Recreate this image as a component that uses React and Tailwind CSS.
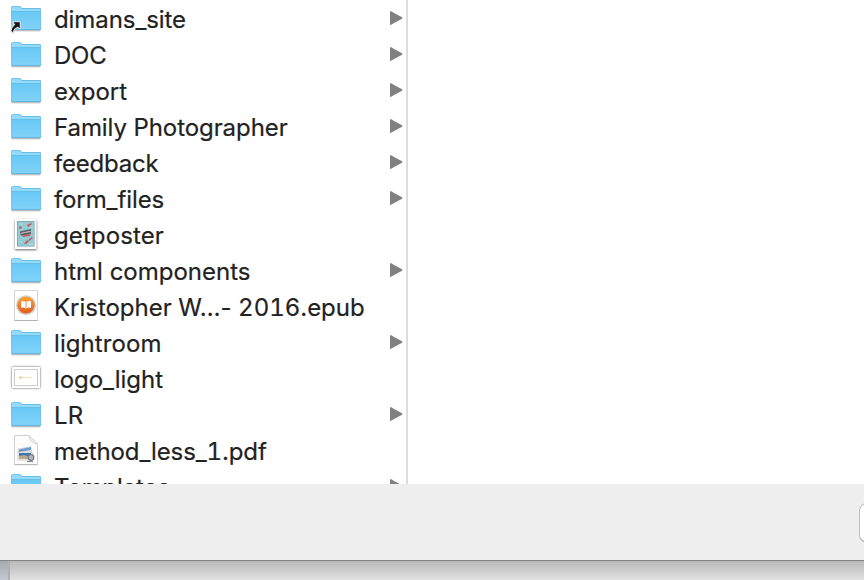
const Folder = ({ alias }) => (
  <svg className="block" width="44" height="36" viewBox="0 0 44 36">
    <defs>
      <linearGradient id="face" x1="0" y1="0" x2="0" y2="1">
        <stop offset="0" stopColor="#69c8f5" />
        <stop offset="1" stopColor="#80d2f8" />
      </linearGradient>
    </defs>
    <path d="M11.5 30.5H40.5" stroke="#b9bec2" strokeWidth="1" />
    <path d="M12 31.5H40" stroke="#e9e9e9" strokeWidth="1" />
    <path d="M11 7.5Q11 6 12.5 6H19.3Q20.2 6 20.9 6.8L21.5 7.4Q22 8 23 8H40Q41 8 41 9V29Q41 30 40 30H12Q11 30 11 29Z" fill="#6bbfe6" />
    <path d="M11.6 7.6Q12 6.800 12.8 6.800H19.200Q19.800 6.800 20.3 7.400L21.300 8.400Q22 9 23 9H40.400V11H11.600Z" fill="#93dafb" />
    <path d="M11.5 11H40.5V29.300H11.5Z" fill="url(#face)" />
    <path d="M11 11.5H41" stroke="#62bfea" strokeWidth="1" />
    <path d="M11.5 29.5H40.5" stroke="#62b6df" strokeWidth="1" />
    {alias && (
      <g>
        <path d="M13 22H20V28.5L18 27Q13.5 28 13 33L11 31Q11 27.500 14.5 24.500Z" fill="#111" stroke="#ddd" strokeWidth="1.600" strokeLinejoin="round" />
        <path d="M13.500 22.300H19.700V28.300L17.800 26.600Q14.200 28 12.800 32L11.500 31Q12 27.500 15.400 24.400Z" fill="#171717" />
      </g>
    )}
  </svg>
);

const Poster = () => (
  <svg className="block" width="44" height="36" viewBox="0 0 44 36">
    <rect x="15" y="3" width="21.500" height="30" fill="#fff" className="drop-shadow-[0_1px_1px_rgba(0,0,0,0.6)]" />
    <rect x="17" y="5" width="17.500" height="25.500" fill="#6c9199" />
    <rect x="17.500" y="5.500" width="16.500" height="24.500" fill="#94cad2" />
    <path d="M27 9L31 7L32 8L28 11ZM19 11L21 10L22 12L19 13ZM29 23L32 21L33 22L29 25ZM24 28L27 24L29 25L26 28Z" fill="#cc5660" />
    <path d="M21 18L31 16L30 20L23 21Z" fill="#c4616a" />
    <path d="M20 15.500L31 13V15L20 17.500ZM20.500 18L31 16V17.500L20.500 19.500Z" fill="#526067" />
    <path d="M21 17.300L30 15.300" stroke="#c9b3a9" />
    <path d="M19 8H23M31 11H33M19 26H22M29 28H33" stroke="#bfe0e2" />
  </svg>
);

const Book = () => (
  <svg className="block" width="44" height="36" viewBox="0 0 44 36">
    <defs>
      <linearGradient id="orange" x1="0" y1="0" x2="0" y2="1">
        <stop offset="0" stopColor="#fba62f" />
        <stop offset="1" stopColor="#e5581a" />
      </linearGradient>
    </defs>
    <rect x="14.500" y="2.500" width="23" height="30" fill="#fff" stroke="#d6d6d6" />
    <path d="M14.500 32.500H37.500" stroke="#b4b4b4" />
    <circle cx="26" cy="17.200" r="10" fill="#cfcfd3" />
    <circle cx="26" cy="17" r="8.600" fill="url(#orange)" />
    <path d="M26 14Q23.500 12.300 21 13.500V20Q23.500 19 25.500 20.500H26.500Q28.500 19 31 20V13.500Q28.500 12.300 26 14Z" fill="#fff" />
    <path d="M26 14V20.500" stroke="#f47b1d" strokeWidth=".8" />
  </svg>
);

const Logo = () => (
  <svg className="block" width="44" height="36" viewBox="0 0 44 36">
    <rect x="12" y="7" width="28" height="21" fill="#fff" className="drop-shadow-[0_0.5px_1px_rgba(0,0,0,0.7)]" />
    <rect x="14.500" y="9.500" width="23" height="16" fill="#fff" stroke="#ccc" />
    <path d="M19 17.500H32" stroke="#f7e3c3" />
    <circle cx="20.500" cy="17.500" r="1.300" fill="#f5c878" />
  </svg>
);

const Pdf = () => (
  <svg className="block" width="44" height="36" viewBox="0 0 44 36">
    <path d="M14.500 3.500H29L37.500 12V32.500H14.500Z" fill="#fdfdfd" stroke="#cecece" />
    <path d="M14.500 32.700H37.500" stroke="#b5b5b5" />
    <path d="M29 3.500Q29.500 11 37.500 12Z" fill="#eee" stroke="#cfcfcf" strokeWidth=".8" />
    <path d="M18 17L31 14.500L32 24L19 27Z" fill="#e9e9e4" stroke="#bbb" strokeWidth=".5" />
    <path d="M19 17.500L31 15V18L19 20Z" fill="#6e9bcc" />
    <path d="M18 20H32V28H18Z" fill="#f4f4f4" stroke="#aaa" strokeWidth=".5" />
    <path d="M19 21H31V24H19Z" fill="#3f73b3" />
    <path d="M19 24L24 23L31 25V27H19Z" fill="#b9a78e" />
    <circle cx="31" cy="25.500" r="2.800" fill="#b0b7bd" stroke="#7b8186" strokeWidth="1.300" />
    <path d="M27 29.500H33" stroke="#888" strokeWidth="1.200" />
  </svg>
);

const rows = [
  { name: "dimans_site", alias: true, tracking: "tracking-[-0.08px]" },
  { name: "DOC", tracking: "tracking-[-0.2px]" },
  { name: "export", tracking: "tracking-[0.05px]" },
  { name: "Family Photographer", tracking: "tracking-[-0.08px]" },
  { name: "feedback", tracking: "tracking-[-0.2px]" },
  { name: "form_files", tracking: "tracking-[-0.1px]" },
  { name: "getposter", icon: Poster, tracking: "tracking-[0.1px]" },
  { name: "html components", tracking: "tracking-[0px]" },
  { name: "Kristopher W…- 2016.epub", icon: Book, tracking: "tracking-[-0.03px]" },
  { name: "lightroom", tracking: "tracking-[0.08px]" },
  { name: "logo_light", icon: Logo, tracking: "tracking-[-0.05px]" },
  { name: "LR", tracking: "tracking-[0.1px]" },
  { name: "method_less_1.pdf", icon: Pdf, tracking: "tracking-[-0.12px]" },
  { name: "Templates", tracking: "tracking-[-0.1px]" },
];

function Row({ name, icon: Icon, alias, tracking }) {
  return (
    <li className="flex h-9 shrink-0 items-start">
      {Icon ? <Icon /> : <Folder alias={alias} />}
      <span className={`ml-[10px] mt-[2px] flex-1 whitespace-nowrap text-[24px] leading-9 text-[#222] [-webkit-text-stroke:0.2px_#222] ${tracking}`}>
        {name.split(/(\d+)/).map((part, i) => (i % 2 ? <span key={i} className="tabular-nums">{part}</span> : part))}
      </span>
      {!Icon && (
        <svg className="mr-[3px] block" width="13" height="36" viewBox="0 0 13 36">
          <path d="M0 11.500Q0 10.700 1 11.200L12 17.300Q12.800 18 12 18.700L1 24.800Q0 25.200 0 24.500Z" fill="#808080" />
        </svg>
      )}
    </li>
  );
}

export default function App() {
  return (
    <div className="flex h-[580px] w-[864px] flex-col overflow-hidden bg-white font-['Inter','Liberation_Sans',sans-serif]">
      <main className="flex h-[484px] shrink-0 overflow-hidden">
        <ul className="flex w-[408px] shrink-0 flex-col overflow-hidden border-r-2 border-[#dcdcdc]">
          {rows.map((row) => <Row key={row.name} {...row} />)}
        </ul>
        <section className="flex-1" />
      </main>
      <footer className="flex h-[76px] shrink-0 items-start justify-end overflow-hidden bg-[#eeeeee] pt-[19px]">
        <button className="-mr-[75px] h-10 w-20 shrink-0 rounded-[8px] border border-b-2 border-[#bfbfbf] bg-white" aria-label="Action" />
      </footer>
      <div className="flex h-5 shrink-0 border-t border-[#858585]">
        <div className="w-[10px] border-r-2 border-[#b0b0b0] bg-linear-to-b from-[#a5aab0] to-[#c4c8d0]" />
        <div className="flex-1 bg-linear-to-b from-[#b8b8b8] to-[#e2e2e2]" />
      </div>
    </div>
  );
}
